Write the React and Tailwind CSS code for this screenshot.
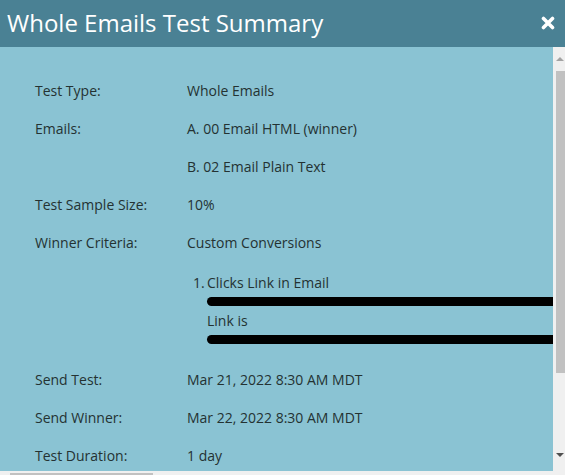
import React from "react";

const rows1 = [
  ["Test Type:", "Whole Emails"],
  ["Emails:", "A. 00 Email HTML (winner)"],
  ["", "B. 02 Email Plain Text"],
  ["Test Sample Size:", "10%"],
  ["Winner Criteria:", "Custom Conversions"],
];
const rows2 = [
  ["Send Test:", "Mar 21, 2022 8:30 AM MDT"],
  ["Send Winner:", "Mar 22, 2022 8:30 AM MDT"],
  ["Test Duration:", "1 day"],
  ["", ""],
];

function Row({ label, value }) {
  return (
    <div className="flex h-[38px] items-center whitespace-nowrap">
      <div className="w-[152px] shrink-0">{label}</div>
      <div>{value}</div>
    </div>
  );
}

export default function App() {
  return (
    <div
      className="w-[565px] h-[475px] overflow-hidden flex flex-col bg-[#8ac3d3] text-[14px] leading-[19px] text-[#243232]"
      style={{ fontFamily: '"Open Sans", "Liberation Sans", sans-serif' }}
    >
      <div className="h-[47px] shrink-0 bg-[#4a8194] flex items-center justify-between pl-[7px] pr-[10px]">
        <div className="text-white text-[24px] leading-[30px] pb-[2px]">Whole Emails Test Summary</div>
        <svg width="14" height="14" viewBox="0 0 14 14" className="mb-[1px]">
          <path d="M2.5 2.5 L11.5 11.5 M11.5 2.5 L2.5 11.5" stroke="#ffffff" strokeWidth="3.6" strokeLinecap="round" />
        </svg>
      </div>
      <div className="h-[424px] shrink-0 flex">
        <div className="flex-1 overflow-hidden pl-[35px] pt-[24px]">
          {rows1.map((r, i) => (
            <Row key={i} label={r[0]} value={r[1]} />
          ))}
          <div className="pl-[158px] mt-[12px] mb-[11px] whitespace-nowrap">
            <div className="flex">
              <span className="w-[14px] shrink-0">1.</span>
              <div className="flex flex-col">
                <div>Clicks Link in Email</div>
                <div className="h-[19px] flex items-center">
                  <div className="h-[9px] w-[360px] rounded-full bg-black" />
                </div>
                <div>Link is</div>
                <div className="h-[19px] flex items-center">
                  <div className="h-[9px] w-[360px] rounded-full bg-black" />
                </div>
              </div>
            </div>
          </div>
          {rows2.map((r, i) => (
            <Row key={i} label={r[0]} value={r[1]} />
          ))}
        </div>
        <div className="w-[12px] shrink-0 bg-[#f0f0f0] flex flex-col items-center">
          <svg width="8" height="6" viewBox="0 0 8 6" className="mt-[9px] ml-[2px]">
            <path d="M0 5 L4 1 L8 5 Z" fill="#a3a3a3" />
          </svg>
          <div className="mt-[9px] ml-[3px] w-[9px] h-[302px] bg-[#c1c1c1]" />
          <div className="flex-1" />
          <svg width="8" height="6" viewBox="0 0 8 6" className="mb-[13px] ml-[2px]">
            <path d="M0 1 L4 5 L8 1 Z" fill="#505050" />
          </svg>
        </div>
      </div>
      <div className="h-[17px] shrink-0 bg-[#f0f0f0] pt-[2px] pl-[10px]">
        <div className="w-[143px] h-[9px] bg-[#c1c1c1]" />
      </div>
    </div>
  );
}
